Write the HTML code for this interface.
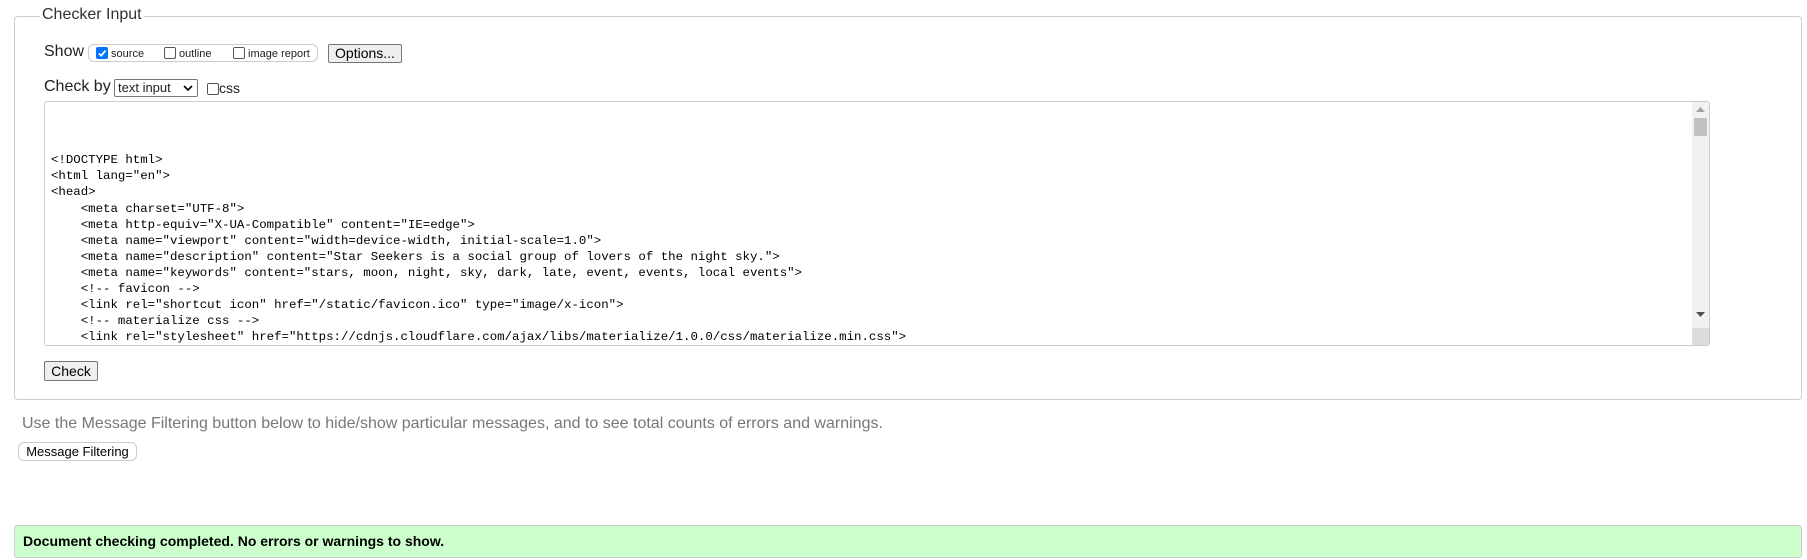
<!DOCTYPE html>
<html><head><style>
body{margin:0;width:1807px;height:560px;background:#fff;font-family:"Liberation Sans",Arial,sans-serif;color:#222;position:relative;overflow:hidden}
.a{position:absolute}
.fs{left:14px;top:16px;width:1786px;height:382px;border:1px solid #ccc;border-radius:4px}
.leg{left:40px;top:6px;background:#fff;padding:0 2px;font-size:16px;color:#333}
.cb{display:inline-block;width:12px;height:12px;border:1px solid #555;border-radius:2px;vertical-align:-2px;background:#fff;box-sizing:border-box}
.cbc{background:#0075ff;border-color:#0075ff;position:relative}
.btn{background:#efefef;border:1px solid #767676;border-radius:2px;font-size:14px;color:#000;text-align:center;box-sizing:border-box}
.ta{left:44px;top:101px;width:1666px;height:245px;border:1px solid #ccc;border-radius:3px;box-sizing:border-box;overflow:hidden}
pre{margin:0;position:absolute;left:6px;top:2px;font-family:"Liberation Mono",monospace;font-size:12.4px;line-height:16.1px;color:#000}
</style></head><body>
<div class="a fs"></div>
<div class="a leg">Checker Input</div>
<div class="a" style="left:44px;top:43px;font-size:16px">Show</div>
<div class="a" style="left:88px;top:44px;width:230px;height:18px;border:1px solid #ccc;border-radius:6px;box-sizing:border-box;font-size:11px;line-height:16px">
<span class="a" style="left:7px;top:1px"><span class="cb cbc"><svg width="12" height="12" style="position:absolute;left:-1px;top:-1px"><path d="M3 6.5l2.2 2.2L9.5 3.5" stroke="#fff" stroke-width="1.8" fill="none"/></svg></span> source</span>
<span class="a" style="left:75px;top:1px"><span class="cb"></span> outline</span>
<span class="a" style="left:144px;top:1px"><span class="cb"></span> image report</span>
</div>
<div class="a btn" style="left:328px;top:44px;width:74px;height:19px;line-height:17px">Options...</div>
<div class="a" style="left:44px;top:78px;font-size:16px">Check by</div>
<div class="a" style="left:114px;top:79px;width:84px;height:18px;border:1px solid #767676;border-radius:2px;box-sizing:border-box;font-size:13px;line-height:16px;padding-left:3px">text input<svg class="a" style="right:4px;top:5px" width="10" height="6"><path d="M1 1l4 4 4-4" stroke="#000" stroke-width="1.6" fill="none"/></svg></div>
<div class="a" style="left:207px;top:80px;font-size:14px"><span class="cb"></span>css</div>
<div class="a ta"><pre>



&lt;!DOCTYPE html&gt;
&lt;html lang="en"&gt;
&lt;head&gt;
    &lt;meta charset="UTF-8"&gt;
    &lt;meta http-equiv="X-UA-Compatible" content="IE=edge"&gt;
    &lt;meta name="viewport" content="width=device-width, initial-scale=1.0"&gt;
    &lt;meta name="description" content="Star Seekers is a social group of lovers of the night sky."&gt;
    &lt;meta name="keywords" content="stars, moon, night, sky, dark, late, event, events, local events"&gt;
    &lt;!-- favicon --&gt;
    &lt;link rel="shortcut icon" href="/static/favicon.ico" type="image/x-icon"&gt;
    &lt;!-- materialize css --&gt;
    &lt;link rel="stylesheet" href="https://cdnjs.cloudflare.com/ajax/libs/materialize/1.0.0/css/materialize.min.css"&gt;
</pre>
<div class="a" style="right:0;top:0;width:17px;height:243px;background:#f1f1f1"></div>
<div class="a" style="right:2px;top:16px;width:13px;height:18px;background:#c1c1c1"></div>
<svg class="a" style="right:4px;top:5px" width="9" height="5"><path d="M0 5L4.5 0 9 5z" fill="#a3a3a3"/></svg>
<svg class="a" style="right:4px;top:210px" width="9" height="5"><path d="M0 0L4.5 5 9 0z" fill="#505050"/></svg>
<div class="a" style="right:0;bottom:0;width:17px;height:17px;background:#dcdcdc"></div>
</div>
<div class="a btn" style="left:44px;top:361px;width:54px;height:20px;line-height:18px">Check</div>
<div class="a" style="left:22px;top:415px;font-size:16px;color:#777">Use the Message Filtering button below to hide/show particular messages, and to see total counts of errors and warnings.</div>
<div class="a" style="left:18px;top:442px;width:119px;height:19px;border:1px solid #ccc;border-radius:6px;box-sizing:border-box;font-size:13px;line-height:17px;text-align:center;color:#000;background:#fff">Message Filtering</div>
<div class="a" style="left:14px;top:525px;width:1788px;height:33px;background:#ccffcc;border:1px solid #ccc;border-radius:3px;box-sizing:border-box;font-size:14px;font-weight:bold;color:#000;line-height:31px;padding-left:8px">Document checking completed. No errors or warnings to show.</div>
</body></html>
